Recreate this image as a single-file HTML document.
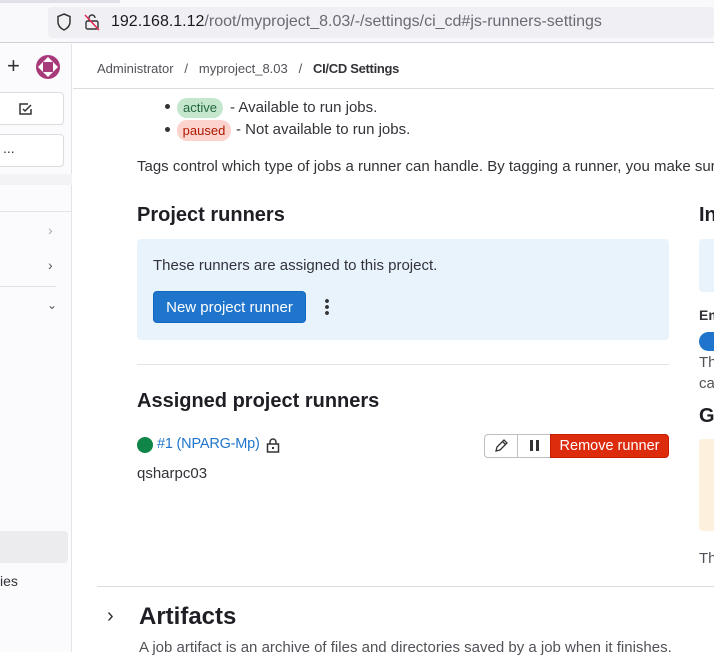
<!DOCTYPE html><html><head><style>
*{box-sizing:border-box;margin:0;padding:0}
body{width:714px;height:652px;overflow:hidden;background:#fff;font-family:"Liberation Sans",sans-serif;color:#333238;position:relative}
.a{position:absolute}
</style></head><body>
<div class="a" style="left:0;top:0;width:714px;height:43px;background:#f9f9fb;border-bottom:1px solid #d0d0d7"></div>
<div class="a" style="left:0;top:0;width:120px;height:3px;background:#e0e0e6"></div>
<div class="a" style="left:48px;top:7px;width:666px;height:31px;background:#f0f0f4;border-radius:4px"></div>
<svg class="a" style="left:56px;top:13px" width="16" height="18" viewBox="0 0 16 18"><path d="M8 1L14 3.5V9c0 4-3 6.5-6 8-3-1.5-6-4-6-8V3.5z" fill="none" stroke="#333" stroke-width="1.5"/></svg>
<svg class="a" style="left:84px;top:13px" width="16" height="18" viewBox="0 0 16 18"><rect x="2" y="8" width="12" height="8" rx="1.5" fill="none" stroke="#333" stroke-width="1.4"/><path d="M5 8V5a3 3 0 016 0" fill="none" stroke="#333" stroke-width="1.4"/><path d="M1 2L15 17" stroke="#e22850" stroke-width="1.5"/></svg>
<div class="a" style="left:111px;top:13px;font-size:16px;color:#1b1b1f;white-space:nowrap">192.168.1.12<span style="color:#6a6a75">/root/myproject_8.03/-/settings/ci_cd#js-runners-settings</span></div>
<div class="a" style="left:0;top:44px;width:72px;height:608px;background:#fbfafd;border-right:1px solid #e4e4e7"></div>
<div class="a" style="left:7px;top:53px;font-size:22px;color:#333">+</div>
<svg class="a" style="left:35px;top:54px" width="26" height="26" viewBox="0 0 26 26"><circle cx="13" cy="13" r="12" fill="#a83a7a"/><path d="M13 3L23 13 13 23 3 13z" fill="#fff"/><rect x="8" y="8" width="10" height="10" fill="#a83a7a"/></svg>
<div class="a" style="left:-4px;top:92px;width:68px;height:33px;border:1px solid #dcdcde;border-radius:4px;background:#fff"></div>
<svg class="a" style="left:18px;top:101px" width="16" height="16" viewBox="0 0 16 16"><path d="M13 8v5H2V3h8" fill="none" stroke="#333" stroke-width="1.5"/><path d="M5 8l2 2 6-6" fill="none" stroke="#333" stroke-width="1.5"/></svg>
<div class="a" style="left:-4px;top:134px;width:68px;height:33px;border:1px solid #dcdcde;border-radius:4px;background:#fff;font-size:14px;padding:5px 0 0 6px">...</div>
<div class="a" style="left:0;top:174px;width:72px;height:11px;background:#f3f3f5"></div>
<div class="a" style="left:0;top:211px;width:72px;height:1px;background:#e4e4e7"></div>
<div class="a" style="left:48px;top:222px;color:#aaa;font-size:14px">›</div>
<div class="a" style="left:48px;top:257px;color:#555;font-size:14px">›</div>
<div class="a" style="left:0;top:286px;width:56px;height:1px;background:#e4e4e7"></div>
<div class="a" style="left:47px;top:298px;color:#555;font-size:12px">⌄</div>
<div class="a" style="left:-4px;top:531px;width:72px;height:32px;background:#ececef;border-radius:4px"></div>
<div class="a" style="left:0;top:573px;font-size:14px">ies</div>
<div class="a" style="left:73px;top:88px;width:641px;height:1px;background:#dcdcde"></div>
<div class="a" style="left:97px;top:61px;font-size:13px;color:#535158;white-space:nowrap">Administrator&nbsp;&nbsp; /&nbsp;&nbsp; myproject_8.03&nbsp;&nbsp; /&nbsp;&nbsp; <b style="color:#333238;letter-spacing:-0.3px">CI/CD Settings</b></div>
<div class="a" style="left:165px;top:104px;width:5px;height:5px;border-radius:50%;background:#333"></div>
<div class="a" style="left:177px;top:98px;width:46px;height:20px;border-radius:10px;background:#c3e6cd;color:#24663b;font-size:13px;text-align:center;line-height:20px">active</div>
<div class="a" style="left:230px;top:99px;font-size:15px">- Available to run jobs.</div>
<div class="a" style="left:165px;top:127px;width:5px;height:5px;border-radius:50%;background:#333"></div>
<div class="a" style="left:177px;top:120px;width:54px;height:21px;border-radius:10px;background:#fdd4cd;color:#ae1800;font-size:13px;text-align:center;line-height:21px">paused</div>
<div class="a" style="left:236px;top:121px;font-size:15px;white-space:nowrap">- Not available to run jobs.</div>
<div class="a" style="left:137px;top:158px;font-size:15px;white-space:nowrap">Tags control which type of jobs a runner can handle. By tagging a runner, you make sure</div>
<div class="a" style="left:137px;top:204px;font-size:20px;font-weight:bold;color:#1f1e24">Project runners</div>
<div class="a" style="left:699px;top:204px;font-size:20px;font-weight:bold;color:#1f1e24">In</div>
<div class="a" style="left:137px;top:239px;width:532px;height:101px;background:#e9f3fc;border-radius:4px"></div>
<div class="a" style="left:699px;top:239px;width:20px;height:53px;background:#e9f3fc;border-radius:4px"></div>
<div class="a" style="left:153px;top:257px;font-size:15px">These runners are assigned to this project.</div>
<div class="a" style="left:153px;top:291px;width:153px;height:32px;background:#1f75cb;border:1px solid #1068bf;border-radius:4px;color:#fff;font-size:15px;text-align:center;line-height:31px">New project runner</div>
<div class="a" style="left:325px;top:298px;width:4px;height:18px;background:radial-gradient(circle,#333 1.8px,transparent 2px) 0 0/4px 6px"></div>
<div class="a" style="left:699px;top:307px;font-size:14px;font-weight:bold">Em</div>
<div class="a" style="left:699px;top:332px;width:20px;height:19px;background:#1f75cb;border-radius:10px 0 0 10px"></div>
<div class="a" style="left:699px;top:354px;font-size:15px;color:#535158">Th</div>
<div class="a" style="left:699px;top:375px;font-size:15px;color:#535158">ca</div>
<div class="a" style="left:699px;top:405px;font-size:20px;font-weight:bold;color:#1f1e24">G</div>
<div class="a" style="left:699px;top:439px;width:20px;height:92px;background:#fdf1dd;border-radius:4px"></div>
<div class="a" style="left:699px;top:550px;font-size:15px;color:#535158">Th</div>
<div class="a" style="left:137px;top:364px;width:532px;height:1px;background:#e4e4e7"></div>
<div class="a" style="left:137px;top:390px;font-size:20px;font-weight:bold;color:#1f1e24">Assigned project runners</div>
<div class="a" style="left:137px;top:437px;width:16px;height:16px;border-radius:50%;background:#108548"></div>
<div class="a" style="left:157px;top:436px;font-size:14.5px;color:#1f75cb;letter-spacing:-0.2px">#1 (NPARG-Mp)</div>
<svg class="a" style="left:266px;top:438px" width="14" height="15" viewBox="0 0 14 15"><rect x="1.5" y="6" width="11" height="8" fill="none" stroke="#333" stroke-width="1.5"/><path d="M4 6V4a3 3 0 016 0v2" fill="none" stroke="#333" stroke-width="1.5"/><rect x="6" y="9" width="2" height="2" fill="#333"/></svg>
<div class="a" style="left:137px;top:465px;font-size:15px">qsharpc03</div>
<div class="a" style="left:484px;top:434px;width:67px;height:24px;border:1px solid #bfbfc3;border-radius:4px 0 0 4px;background:#fff"></div>
<div class="a" style="left:517px;top:434px;width:1px;height:24px;background:#bfbfc3"></div>
<svg class="a" style="left:493px;top:438px" width="16" height="16" viewBox="0 0 16 16"><path d="M3 13l1-4 7-7 3 3-7 7z M9.5 3.5l3 3" fill="none" stroke="#333" stroke-width="1.3"/></svg>
<div class="a" style="left:530px;top:440px;width:3px;height:11px;background:#333"></div>
<div class="a" style="left:536px;top:440px;width:3px;height:11px;background:#333"></div>
<div class="a" style="left:550px;top:434px;width:119px;height:24px;background:#dd2b0e;border:1px solid #c91c00;border-radius:0 4px 4px 0;color:#fff;font-size:14.5px;text-align:center;line-height:23px">Remove runner</div>
<div class="a" style="left:97px;top:586px;width:617px;height:1px;background:#dcdcde"></div>
<div class="a" style="left:107px;top:605px;font-size:20px;color:#333">›</div>
<div class="a" style="left:139px;top:603px;font-size:24px;font-weight:bold;color:#1f1e24">Artifacts</div>
<div class="a" style="left:139px;top:639px;font-size:15px;color:#535158;white-space:nowrap">A job artifact is an archive of files and directories saved by a job when it finishes.</div>
</body></html>
